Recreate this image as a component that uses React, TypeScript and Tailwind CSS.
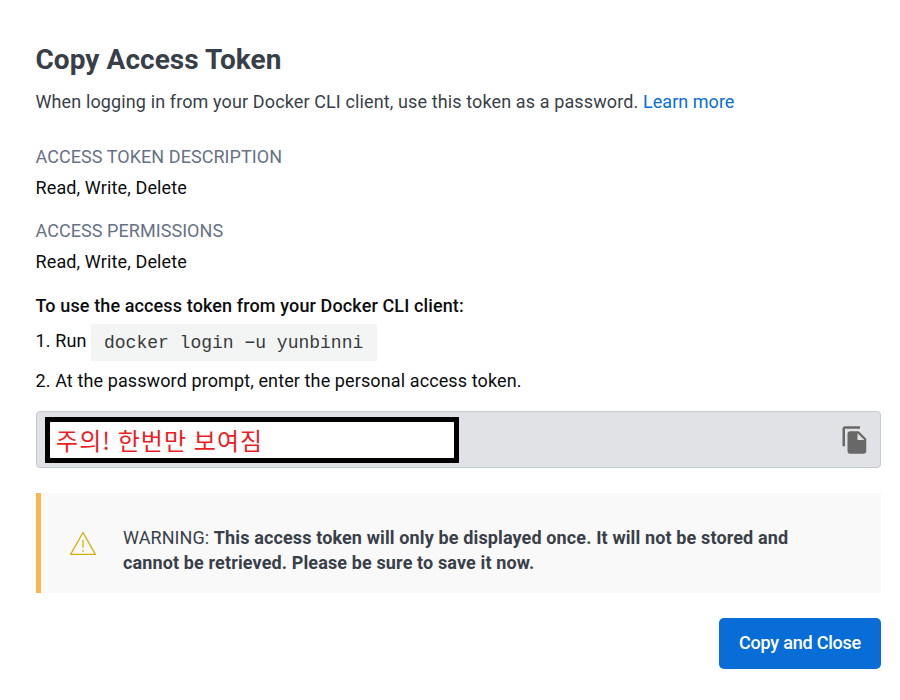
import React from "react";

export default function App() {
  return (
    <main className="h-[700px] w-[900px] overflow-hidden bg-white pl-9 pr-[19px] pt-[40px] font-[Roboto,sans-serif] text-[18px] leading-[26px] text-[#0c0d0e]">
      <h1 className="-ml-[0.5px] h-[40px] text-[28px] font-bold leading-[40px] tracking-[0.05px] text-[#393f49]">Copy Access Token</h1>
      <p className="-ml-[0.5px] mt-[9px] text-[#393f49]">
        <span className="tracking-[0.12px]">When logging in from your Docker CLI client, use this token as a password. </span>
        <a className="tracking-[0.04px] text-[#086dd7]">Learn more</a>
      </p>
      <section className="-ml-[0.5px] mt-[29px]">
        <h2 className="tracking-[0.06px] text-[#677285]">ACCESS TOKEN DESCRIPTION</h2>
        <p className="mt-[5px] tracking-[0.13px]">Read, Write, Delete</p>
      </section>
      <section className="-ml-[0.5px] mt-[17px]">
        <h2 className="tracking-[0.06px] text-[#677285]">ACCESS PERMISSIONS</h2>
        <p className="mt-[5px] tracking-[0.13px]">Read, Write, Delete</p>
      </section>
      <p className="-ml-[0.5px] mt-[18px] font-medium tracking-[0.12px]">To use the access token from your Docker CLI client:</p>
      <div className="-ml-[0.5px] mt-[5px] flex h-[37px] items-center">
        <span className="w-[55.5px] pb-[3px] tracking-[0.12px]">1. Run</span>
        <code className="flex h-[37px] w-[286px] items-center bg-[#f3f4f4] pl-[13px] font-['Liberation_Mono',monospace] text-[18px] text-[#3a3b3c]">docker login −u yunbinni</code>
      </div>
      <p className="-ml-[0.5px] mt-[7px] tracking-[0.11px]">2. At the password prompt, enter the personal access token.</p>
      <div className="mt-[17px] flex h-[57px] w-[845px] items-center rounded border border-[#c4c8d1] bg-[#e1e2e6] pl-2 pr-[10px]">
        <div className="flex h-[46px] w-[414px] items-center border-[5px] border-black bg-white pl-[6px] font-['Noto_Sans_CJK_KR',sans-serif] text-[24px] tracking-[1.1px] text-[#ed1c24]">주의! 한번만 보여짐</div>
        <svg className="ml-auto h-[30px] w-[30px]" viewBox="0 0 24 24" fill="#686868">
          <path d="M16 1H4c-1.1 0-2 .9-2 2v14h2V3h12V1zm-1 4 6 6v10c0 1.1-.9 2-2 2H7.99C6.89 23 6 22.1 6 21V7c0-1.1.89-2 1.99-2h7zm-1 7h5.5L14 6.5V12z" />
        </svg>
      </div>
      <div className="mt-[25px] flex h-[100px] w-[845px] items-center border-l-[5px] border-[#fbb552] bg-[#f9f9f9] pl-[29px]">
        <svg className="h-[26px] w-[27px] shrink-0" viewBox="0 0 27 26" fill="none" stroke="#d4b106" strokeWidth="1.3" strokeLinejoin="round">
          <path d="M13 2.5.6 24.4h24.8zM13 10v7.5M13 20v1.8" />
        </svg>
        <p className="ml-[26px] pt-[14px] leading-[25px] text-[#393f49]"><span className="tracking-[0.08px]">WARNING: </span><strong className="tracking-[0.13px]">This access token will only be displayed once. It will not be stored and<br />cannot be retrieved. Please be sure to save it now.</strong></p>
      </div>
      <button className="ml-auto mt-[25px] flex h-[51px] w-[162px] items-center justify-center rounded-[5px] bg-[#086dd7] pb-[2px] font-medium tracking-[-0.22px] text-white">Copy and Close</button>
    </main>
  );
}
